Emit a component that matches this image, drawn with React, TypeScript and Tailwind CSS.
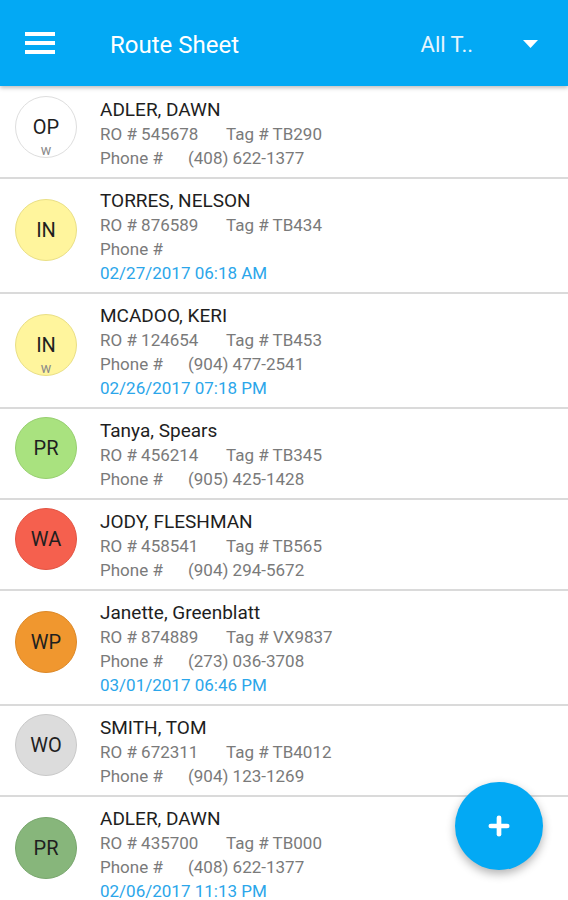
import { Plus } from "lucide-react";

interface Ticket {
    code: string;
    sub?: string;
    color: string;
    name: string;
    ro: string;
    tag: string;
    phone: string;
    date?: string;
}

const tickets: Ticket[] = [
    { code: "OP", sub: "w", color: "bg-white border-[#dedede]", name: "ADLER, DAWN", ro: "545678", tag: "TB290", phone: "(408) 622-1377" },
    { code: "IN", color: "bg-[#fff59d] border-[#e9df86]", name: "TORRES, NELSON", ro: "876589", tag: "TB434", phone: "", date: "02/27/2017 06:18 AM" },
    { code: "IN", sub: "w", color: "bg-[#fff59d] border-[#e9df86]", name: "MCADOO, KERI", ro: "124654", tag: "TB453", phone: "(904) 477-2541", date: "02/26/2017 07:18 PM" },
    { code: "PR", color: "bg-[#a9e27f] border-[#97cf70]", name: "Tanya, Spears", ro: "456214", tag: "TB345", phone: "(905) 425-1428" },
    { code: "WA", color: "bg-[#f5604e] border-[#e25443]", name: "JODY, FLESHMAN", ro: "458541", tag: "TB565", phone: "(904) 294-5672" },
    { code: "WP", color: "bg-[#f0972f] border-[#dc8828]", name: "Janette, Greenblatt", ro: "874889", tag: "VX9837", phone: "(273) 036-3708", date: "03/01/2017 06:46 PM" },
    { code: "WO", color: "bg-[#dcdcdc] border-[#c9c9c9]", name: "SMITH, TOM", ro: "672311", tag: "TB4012", phone: "(904) 123-1269" },
    { code: "PR", color: "bg-[#87b67b] border-[#78a66d]", name: "ADLER, DAWN", ro: "435700", tag: "TB000", phone: "(408) 622-1377", date: "02/06/2017 11:13 PM" },
];

function TicketRow({ t }: { t: Ticket }) {
    return (
        <div className="flex items-center border-b-2 border-[#dadada]">
            <div className="pl-[15px] pr-[23px] mb-[11px]">
                <div
                    className={`relative flex h-[62px] w-[62px] items-center justify-center rounded-full border ${t.color}`}
                >
                    <span className="text-[20px] text-[#1f1f1f]">{t.code}</span>
                    {t.sub && (
                        <span className="absolute bottom-[0px] left-0 right-0 text-center text-[14px] leading-[14px] text-[#8a8a8a]">
                            {t.sub}
                        </span>
                    )}
                </div>
            </div>
            <div className="flex-1 pt-[10px] pb-[7px] leading-[24px]">
                <div className="text-[19px] text-[#1e1e1e]">{t.name}</div>
                <div className="flex text-[17px] text-[#7a7a7a]">
                    <span className="w-[126px]">RO # {t.ro}</span>
                    <span>Tag # {t.tag}</span>
                </div>
                <div className="flex text-[17px] text-[#7a7a7a]">
                    <span className="w-[88px]">Phone #</span>
                    <span>{t.phone}</span>
                </div>
                {t.date && (
                    <div className="text-[17px] text-[#2ba6ea]">{t.date}</div>
                )}
            </div>
        </div>
    );
}

export default function App() {
    return (
        <div className="relative h-[900px] w-[568px] overflow-hidden bg-white font-['Roboto',sans-serif]">
            <header className="relative z-10 flex h-[86px] items-center bg-[#03a9f4] text-white shadow-[0_2px_4px_rgba(0,0,0,0.25)]">
                <button className="ml-[25px] flex w-[30px] flex-col gap-[5px]">
                    <span className="h-[4px] w-full bg-white" />
                    <span className="h-[4px] w-full bg-white" />
                    <span className="h-[4px] w-full bg-white" />
                </button>
                <h1 className="ml-[55px] mt-[3px] text-[24px] font-normal">Route Sheet</h1>
                <div className="ml-auto mt-[3px] flex items-center">
                    <span className="text-[22px] text-[#e6f5fd]">All T..</span>
                    <svg className="ml-[50px] mr-[30px]" width="15" height="9" viewBox="0 0 15 9">
                        <path d="M0 0 L15 0 L7.5 8 Z" fill="white" />
                    </svg>
                </div>
            </header>

            <div className="pt-[2px]">
                {tickets.map((t, i) => (
                    <TicketRow key={i} t={t} />
                ))}
            </div>

            <button className="absolute bottom-[30px] right-[25px] flex h-[88px] w-[88px] items-center justify-center rounded-full bg-[#03a9f4] shadow-[0_4px_10px_rgba(0,0,0,0.3)]">
                <Plus className="h-[28px] w-[28px] text-white" strokeWidth={4} />
            </button>
        </div>
    );
}
